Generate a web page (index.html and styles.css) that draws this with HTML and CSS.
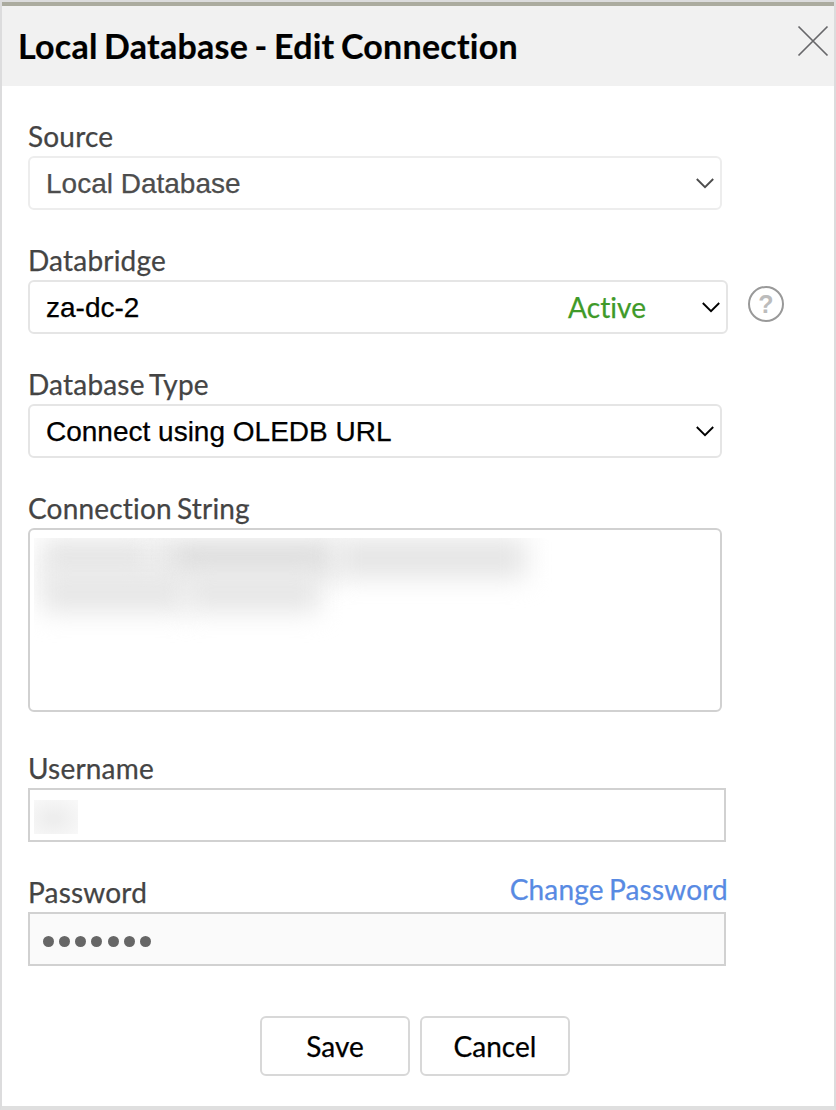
FILE: index.html
```html
<!DOCTYPE html>
<html lang="en">
<head>
<meta charset="utf-8">
<title>Local Database - Edit Connection</title>
<link rel="stylesheet" href="styles.css">
</head>
<body>
<main class="dialog">
  <header class="dialog-header">
    <h1 class="title">Local Database - Edit Connection</h1>
    <svg class="close" width="32" height="32" viewBox="0 0 32 32" role="img" aria-label="Close"><path d="M1.5 1.5 30.5 30.5M30.5 1.5 1.5 30.5"/></svg>
  </header>
  <form class="form">
    <section class="field">
      <span class="label">Source</span>
      <div class="select disabled"><span class="value">Local Database</span><svg class="chevron" width="18" height="12" viewBox="0 0 18 12"><path d="M.8 2 9 10.2 17.2 2"/></svg></div>
    </section>
    <section class="field">
      <span class="label">Databridge</span>
      <div class="with-help">
        <div class="select wide"><span class="value">za-dc-2</span><span class="status">Active</span><svg class="chevron" width="18" height="12" viewBox="0 0 18 12"><path d="M.8 2 9 10.2 17.2 2"/></svg></div>
        <span class="help">?</span>
      </div>
    </section>
    <section class="field">
      <span class="label">Database Type</span>
      <div class="select"><span class="value">Connect using OLEDB URL</span><svg class="chevron" width="18" height="12" viewBox="0 0 18 12"><path d="M.8 2 9 10.2 17.2 2"/></svg></div>
    </section>
    <section class="field field-area">
      <span class="label">Connection String</span>
      <div class="textarea"><div class="redacted">
        <div class="smudge-row"><i class="smudge s1"></i><i class="smudge s2"></i><i class="smudge s3"></i><i class="smudge s4"></i></div>
        <div class="smudge-row"><i class="smudge s5"></i><i class="smudge s6"></i></div>
      </div></div>
    </section>
    <section class="field">
      <span class="label">Username</span>
      <div class="input"><span class="redacted-name"></span></div>
    </section>
    <section class="field">
      <div class="label-row"><span class="label">Password</span><a class="link">Change Password</a></div>
      <div class="input locked"><span class="dots"><i></i><i></i><i></i><i></i><i></i><i></i><i></i></span></div>
    </section>
    <footer class="actions">
      <button class="button" type="button">Save</button>
      <button class="button" type="button">Cancel</button>
    </footer>
  </form>
</main>
</body>
</html>
```
FILE: styles.css
```css
* { box-sizing: border-box; }
body { margin: 0; background: #fff; font-family: Lato, sans-serif; font-variant-ligatures: none; }
.dialog { width: 836px; height: 1110px; border: 2px solid #dcdcdd; border-bottom: 4px solid #dfdfdf; background: #fff; overflow: hidden; }
.dialog-header { height: 84px; border-top: 4px solid #abab9f; background: #f1f1f1; display: flex; justify-content: space-between; padding: 0 5px 0 16px; }
.title { margin: 0; font-size: 34px; line-height: 80px; font-weight: 700; color: #000; white-space: nowrap; letter-spacing: .24px; word-spacing: -2px; -webkit-text-stroke: .2px #000; }
.close { margin-top: 19px; fill: none; stroke: #67676a; stroke-width: 1.7; }
.form { padding: 32px 0 0 26px; }
.field { height: 124px; }
.field-area { height: 260px; }
.label { display: block; height: 38px; line-height: 36px; font-size: 28px; color: #444; white-space: nowrap; }
.label, .link { letter-spacing: .19px; word-spacing: -2.2px; -webkit-text-stroke: .25px currentColor; }
.select { width: 694px; height: 54px; border: 2px solid #e5e5e5; border-radius: 6px; display: flex; align-items: center; padding: 0 6px 0 16px; background: #fff; }
.wide { width: 700px; }
.disabled { border-color: #ededed; }
.value { flex: 1; padding-top: 2px; font-family: "Liberation Sans", Arial, sans-serif; font-size: 28px; line-height: 48px; color: #000; white-space: nowrap; -webkit-text-stroke: .25px currentColor; }
.disabled .value { color: #4d4d4d; }
.chevron { fill: none; stroke: #000; stroke-width: 1.9; }
.disabled .chevron { stroke: #4d4d4d; }
.status { width: 134px; font-size: 28px; line-height: 50px; letter-spacing: .1px; color: #3f9a29; -webkit-text-stroke: .25px currentColor; }
.with-help { display: flex; gap: 20px; }
.help { width: 36px; height: 36px; margin-top: 6px; border: 2px solid #999; border-radius: 50%; font: 700 25px/33px "Liberation Sans", Arial, sans-serif; text-align: center; color: #bcbcbc; }
.textarea { width: 694px; height: 184px; border: 2px solid #d1d1d1; border-radius: 6px; padding: 8px 4px; }
.redacted { width: 632px; height: 124px; overflow: hidden; padding-left: 7px; }
.smudge-row { display: flex; height: 34px; }
.smudge { display: block; height: 40px; background: #e6e6e6; filter: blur(13px); }
.s1 { width: 109px; }
.s2 { width: 16px; }
.s3 { width: 170px; background: #dfdfdf; }
.s4 { width: 190px; background: #e5e5e5; }
.s5 { width: 145px; }
.s6 { width: 134px; }
.input { width: 698px; height: 54px; border: 2px solid #d1d1d1; padding: 10px 4px; }
.locked { background: #fafafa; padding: 22px 12px; }
.redacted-name { display: block; width: 44px; height: 34px; background: radial-gradient(ellipse at 45% 55%, #eee 15%, #f8f8f8 90%); }
.label-row { display: flex; justify-content: space-between; width: 700px; }
.link { font-size: 28px; line-height: 30px; color: #588ae3; white-space: nowrap; }
.dots { display: flex; gap: 5.3px; padding-left: .5px; }
.dots i { width: 11px; height: 11px; border-radius: 50%; background: #666; }
.actions { display: flex; gap: 10px; padding-left: 232px; margin-top: 18px; }
.button { width: 150px; height: 60px; padding: 0; border: 2px solid #d8d8d8; border-radius: 6px; background: #fff; color: #000; font: 28px/56px Lato, sans-serif; -webkit-text-stroke: .25px currentColor; }
```
